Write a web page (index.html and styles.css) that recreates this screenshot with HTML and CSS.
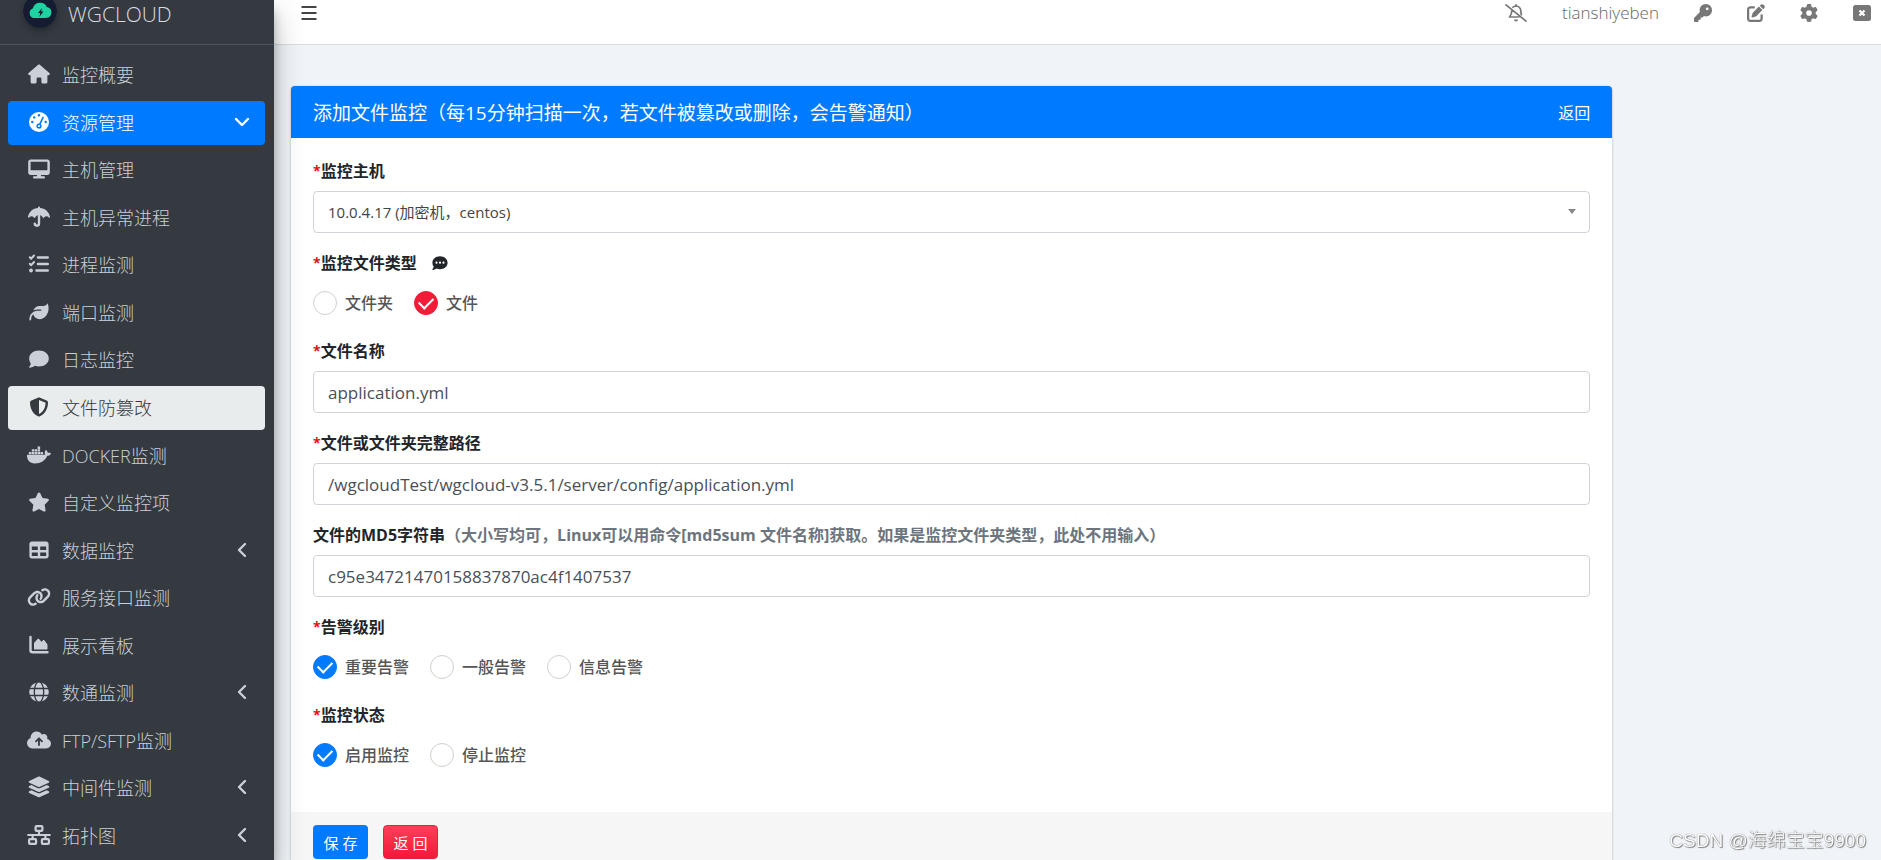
FILE: index.html
```html
<!DOCTYPE html>
<html lang="zh-CN">
<head>
<meta charset="utf-8">
<title>WGCLOUD</title>
<link rel="stylesheet" href="styles.css">
</head>
<body>
<div class="app">
  <aside class="sidebar">
    <a class="brand" href="#">
      <svg class="brand-logo" viewBox="0 0 34 34" aria-hidden="true"><circle cx="17" cy="17" r="17" fill="#131c30"/><path fill="#1ed3a2" d="M11 24a5 5 0 0 1-1.200-9.600 7.500 7.500 0 0 1 14-1.500A5.600 5.600 0 0 1 23 24z"/><path fill="#131c30" d="M19 14l-4 5h2.300l-1 4 4.200-5.400h-2.400z"/></svg>
      <span>WGCLOUD</span>
    </a>
    <nav class="menu">
      <a class="item" href="#"><svg class="ico" viewBox="-32 -64 640 640"><path d="M575.8 255.500c0 18-15 32.100-32 32.100h-32l.7 160.200c0 2.700-.2 5.400-.5 8.100V472c0 22.100-17.900 40-40 40H392c-22.100 0-40-17.900-40-40V384c0-17.700-14.300-32-32-32H256c-17.700 0-32 14.300-32 32v88c0 22.100-17.900 40-40 40H104c-22.100 0-40-17.900-40-40V287.600H32c-18 0-32-14-32-32.100c0-9 3-17 10-24L266.400 8c7-7 15-8 22-8s15 2 21 7L564.800 231.500c8 7 12 15 11 24z"/></svg><span>监控概要</span></a>
      <a class="item item-open" href="#"><svg class="ico" viewBox="0 0 24 24"><circle cx="12" cy="12" r="10"/><g fill="#007bff"><circle cx="12" cy="5.300" r="1.200"/><circle cx="7.200" cy="7.400" r="1.200"/><circle cx="5.300" cy="12" r="1.200"/><circle cx="18.700" cy="12" r="1.200"/><circle cx="12" cy="16" r="2.600"/></g><path d="M12 16l4-8.500" stroke="#007bff" stroke-width="1.700" stroke-linecap="round"/><circle cx="12" cy="16" r="1.100"/></svg><span>资源管理</span><svg class="chev" viewBox="0 0 16 16"><path d="M2 5l6 6 6-6"/></svg></a>
      <a class="item" href="#"><svg class="ico" viewBox="-32 -64 640 640"><path d="M64 0C28.700 0 0 28.700 0 64V352c0 35.300 28.700 64 64 64H240l-10.700 32H160c-17.700 0-32 14.300-32 32s14.300 32 32 32H416c17.700 0 32-14.300 32-32s-14.300-32-32-32H346.700L336 416H512c35.300 0 64-28.700 64-64V64c0-35.300-28.700-64-64-64H64zM512 64V288H64V64H512z"/></svg><span>主机管理</span></a>
      <a class="item" href="#"><svg class="ico" viewBox="0 0 24 24"><path d="M11 3V2.500a1 1 0 0 1 2 0V3c5 .4 9 3.600 10 9 .1.700-.6 1-1.100.500C20 10.600 18 10.700 16.400 13.300 15 10.800 13.500 10 12 10s-3 .8-4.400 3.300C6 10.700 4 10.600 2.100 12.500 1.600 13 .9 12.700 1 12 2 6.600 6 3.400 11 3z"/><path class="line" d="M12 11v7.600a2.100 2.100 0 0 1-4.200 0" stroke-width="2.400"/></svg><span>主机异常进程</span></a>
      <a class="item" href="#"><svg class="ico" viewBox="0 0 24 24"><path class="line" stroke-width="2" d="M2.800 5.200l1.400 1.500L7 3.500M2.800 11.700l1.400 1.500L7 10"/><circle cx="4" cy="18.500" r="1.900"/><path class="line" stroke-width="2.600" d="M11 5.500h9.700M11 12h9.700M9.500 18.500h11.200"/></svg><span>进程监测</span></a>
      <a class="item" href="#"><svg class="ico" viewBox="-64 -64 640 640"><path d="M272 96c-78.600 0-145.100 51.500-167.700 122.500c33.600-17 71.500-26.500 111.700-26.500h88c8.800 0 16 7.200 16 16s-7.200 16-16 16H216c-16.600 0-32.700 1.900-48.200 5.400c-25.900 5.900-50 16.400-71.400 30.700C38.300 298.800 0 364.900 0 440v16c0 13.300 10.700 24 24 24s24-10.700 24-24V440c0-48.700 20.700-92.500 53.800-123.200C121.600 392.300 190.300 448 272 448l1 0c132.100-.7 239-130.900 239-291.400c0-42.600-7.500-83.100-21.100-119.600c-2.600-6.900-12.700-6.600-16.200-.1C455.900 72.100 418.700 96 376 96L272 96z"/></svg><span>端口监测</span></a>
      <a class="item" href="#"><svg class="ico" viewBox="0 0 24 24"><path d="M12 3.500c5.500 0 9.800 3.500 9.800 8s-4.300 8-9.800 8c-1.400 0-2.800-.2-4-.7-1.500 1-3.400 1.900-5.400 1.900-.5 0-.7-.5-.4-.9.900-1 1.400-2.200 1.600-3.300C2.900 15.100 2.200 13.400 2.200 11.500c0-4.500 4.300-8 9.800-8z"/></svg><span>日志监控</span></a>
      <a class="item item-current" href="#"><svg class="ico" viewBox="-64 -64 640 640"><path d="M256 0c4.600 0 9.200 1 13.400 2.900L457.700 82.800c22 9.300 38.400 31 38.300 57.200c-.5 99.200-41.300 280.700-213.600 363.200c-16.700 8-36.100 8-52.800 0C57.300 420.700 16.500 239.200 16 140c-.1-26.200 16.300-47.900 38.300-57.200L242.700 2.900C246.800 1 251.400 0 256 0zm0 66.800V444.800C394 378 431.100 230.100 432 141.400L256 66.800z"/></svg><span>文件防篡改</span></a>
      <a class="item" href="#"><svg class="ico" viewBox="0 -64 640 640"><path d="M349.900 236.300h-66.100v-59.400h66.100v59.400zm0-204.300h-66.100v60.700h66.100V32zm78.200 144.800H362v59.400h66.100v-59.400zm-156.300-72.100h-66.100v60.100h66.100v-60.100zm78.100 0h-66.100v60.100h66.100v-60.100zm276.800 100c-14.400-9.700-47.600-13.200-73.100-8.400-3.300-24-16.700-44.900-41.100-63.700l-14-9.300-9.300 14c-18.400 27.800-23.400 73.600-3.700 103.800-8.700 4.700-25.800 11.100-48.400 10.700H2.400c-8.700 50.800 5.800 116.800 44 162.100 37.100 43.900 92.700 66.200 165.400 66.200 157.400 0 273.900-72.500 328.400-204.200 21.400.4 67.600.1 91.300-45.200 1.500-2.500 6.600-13.200 8.500-17.100l-13.300-8.900zm-511.100-27.900h-66v59.400h66.100v-59.400zm78.100 0h-66.100v59.400h66.100v-59.400zm78.100 0h-66.100v59.400h66.100v-59.400zm-78.100-72.100h-66.100v60.100h66.100v-60.100z"/></svg><span>DOCKER监测</span></a>
      <a class="item" href="#"><svg class="ico" viewBox="-32 -64 640 640"><path d="M316.900 18C311.600 7 300.400 0 288.100 0s-23.400 7-28.800 18L195 150.300 51.400 171.500c-12 1.800-22 10.200-25.700 21.700s-.7 24.200 7.900 32.700L137.800 329 113.200 474.700c-2 12 3 24.200 12.900 31.300s23 8 33.800 2.300l128.300-68.500 128.300 68.500c10.800 5.700 23.900 4.900 33.800-2.300s14.900-19.300 12.900-31.300L438.500 329 542.700 225.900c8.600-8.500 11.700-21.200 7.900-32.700s-13.700-19.900-25.700-21.700L381.200 150.300 316.900 18z"/></svg><span>自定义监控项</span></a>
      <a class="item" href="#"><svg class="ico" viewBox="-64 -64 640 640"><path d="M64 256V160H224v96H64zm0 64H224v96H64V320zm224 96V320H448v96H288zM448 256H288V160H448v96zM64 32C28.700 32 0 60.700 0 96V416c0 35.300 28.700 64 64 64H448c35.300 0 64-28.700 64-64V96c0-35.300-28.700-64-64-64H64z"/></svg><span>数据监控</span><svg class="chev" viewBox="0 0 16 16"><path d="M11 2L5 8l6 6"/></svg></a>
      <a class="item" href="#"><svg class="ico" viewBox="0 -64 640 640"><path d="M579.800 267.700c56.500-56.500 56.500-148 0-204.500c-50-50-128.800-56.500-186.300-15.400l-1.600 1.100c-14.400 10.300-17.700 30.300-7.400 44.600s30.300 17.700 44.600 7.400l1.600-1.100c32.100-22.900 76-19.300 103.800 8.600c31.500 31.500 31.500 82.500 0 114L422.300 334.800c-31.500 31.500-82.500 31.500-114 0c-27.900-27.900-31.500-71.800-8.600-103.800l1.100-1.600c10.300-14.400 6.900-34.400-7.400-44.600s-34.400-6.900-44.600 7.400l-1.100 1.600C206.500 251.200 213 330 263 380c56.500 56.500 148 56.500 204.500 0L579.800 267.700zM60.200 244.300c-56.500 56.500-56.500 148 0 204.500c50 50 128.800 56.500 186.300 15.400l1.600-1.100c14.400-10.300 17.700-30.300 7.400-44.600s-30.300-17.700-44.600-7.400l-1.600 1.100c-32.100 22.900-76 19.300-103.800-8.600C74 372 74 321 105.500 289.500L217.700 177.200c31.500-31.500 82.500-31.500 114 0c27.900 27.900 31.500 71.800 8.600 103.900l-1.100 1.600c-10.300 14.400-6.900 34.400 7.400 44.600s34.400 6.900 44.600-7.400l1.100-1.600C433.500 260.800 427 182 377 132c-56.500-56.500-148-56.500-204.500 0L60.200 244.300z"/></svg><span>服务接口监测</span></a>
      <a class="item" href="#"><svg class="ico" viewBox="0 0 24 24"><path class="line" stroke-width="2.400" d="M3.500 4v13.300a2 2 0 0 0 2 2h15"/><path d="M7 15.500v-5c0-.4.100-.7.400-.9l3-3.400c.5-.6 1.300-.6 1.800 0l2.300 2.500 1.300-1.300c.5-.5 1.300-.4 1.700.1l2.600 3.500c.2.300.4.600.4 1v3.500c0 .5-.4 1-1 1H8c-.6 0-1-.4-1-1z"/></svg><span>展示看板</span></a>
      <a class="item" href="#"><svg class="ico" viewBox="0 0 24 24"><circle cx="12" cy="12" r="9.800"/><g fill="none" stroke="#343a40" stroke-width="1.300"><ellipse cx="12" cy="12" rx="4.700" ry="10.300"/><path d="M2 8.500h20M2 15.500h20"/></g></svg><span>数通监测</span><svg class="chev" viewBox="0 0 16 16"><path d="M11 2L5 8l6 6"/></svg></a>
      <a class="item" href="#"><svg class="ico" viewBox="0 -64 640 640"><path d="M144 480C64.500 480 0 415.500 0 336c0-62.800 40.200-116.200 96.200-135.900c-.1-2.700-.2-5.400-.2-8.100c0-88.400 71.600-160 160-160c59.300 0 111 32.200 138.700 80.200C409.900 102 428.300 96 448 96c53 0 96 43 96 96c0 12.200-2.300 23.800-6.400 34.600C596 238.400 640 290.100 640 352c0 70.700-57.300 128-128 128H144z"/><path d="M320 390V220M240 290l80-80 80 80" fill="none" stroke="#343a40" stroke-width="48" stroke-linecap="round" stroke-linejoin="round"/></svg><span>FTP/SFTP监测</span></a>
      <a class="item" href="#"><svg class="ico" viewBox="-10 -40 596 596"><path d="M264.500 5.200c14.900-6.900 32.100-6.900 47 0l218.600 101c8.500 3.900 13.900 12.400 13.900 21.800s-5.400 17.900-13.900 21.800l-218.600 101c-14.900 6.900-32.100 6.900-47 0L45.900 149.800C37.400 145.800 32 137.300 32 128s5.400-17.900 13.900-21.800L264.500 5.200zM476.900 209.600l53.200 24.600c8.500 3.900 13.900 12.400 13.900 21.800s-5.400 17.900-13.900 21.800l-218.600 101c-14.900 6.900-32.100 6.900-47 0L45.900 277.800C37.400 273.800 32 265.300 32 256s5.400-17.900 13.900-21.800l53.200-24.600 152 70.200c23.400 10.800 50.400 10.800 73.800 0l152-70.200zm-152 198.200l152-70.200 53.200 24.600c8.500 3.900 13.900 12.400 13.900 21.800s-5.400 17.900-13.900 21.800l-218.600 101c-14.900 6.900-32.100 6.900-47 0L45.900 405.800C37.400 401.800 32 393.300 32 384s5.400-17.900 13.900-21.800l53.200-24.600 152 70.200c23.400 10.800 50.400 10.800 73.800 0z"/></svg><span>中间件监测</span><svg class="chev" viewBox="0 0 16 16"><path d="M11 2L5 8l6 6"/></svg></a>
      <a class="item" href="#"><svg class="ico" viewBox="0 0 24 24"><g class="line" stroke-width="2.200"><rect x="8.600" y="3.100" width="6.800" height="4.800" rx="1"/><rect x="2.100" y="16.100" width="7" height="4.800" rx="1"/><rect x="14.900" y="16.100" width="7" height="4.800" rx="1"/><path d="M1.200 12h21.600M12 8v4M5.600 12v4M18.400 12v4"/></g></svg><span>拓扑图</span><svg class="chev" viewBox="0 0 16 16"><path d="M11 2L5 8l6 6"/></svg></a>
    </nav>
  </aside>

  <div class="page">
    <header class="topbar">
      <button class="tool" type="button" aria-label="菜单"><svg viewBox="0 0 18 18"><path d="M1.500 3h15M1.500 9h15M1.500 15h15" fill="none" stroke="#444" stroke-width="2"/></svg></button>
      <div class="tools">
        <button class="tool tool-wide" type="button" aria-label="消息"><svg viewBox="0 0 22 18"><g fill="none" stroke="#777" stroke-width="1.700" stroke-linecap="round" stroke-linejoin="round"><path d="M1 .9l20 16.200M6.800 6.600c0 3.500-.8 4.800-2.300 6.400h9.200M8 3.200A5 5 0 0 1 11 2a4.800 4.800 0 0 1 4.800 5c0 1.600.2 2.700.6 3.600M11 .8V2"/></g><path fill="#777" d="M9 15.500h4a2 2 0 0 1-4 0z"/></svg></button>
        <a class="user" href="#">tianshiyeben</a>
        <button class="tool" type="button" aria-label="密码"><svg viewBox="0 0 512 512"><path d="M336 352c97.200 0 176-78.800 176-176S433.200 0 336 0S160 78.800 160 176c0 18.700 2.900 36.800 8.300 53.700L7 391c-4.500 4.500-7 10.600-7 17v80c0 13.300 10.700 24 24 24h80c13.300 0 24-10.700 24-24V448h40c13.300 0 24-10.700 24-24V384h40c6.400 0 12.500-2.500 17-7l33.300-33.300c16.900 5.400 35 8.300 53.700 8.300zM376 96a40 40 0 1 1 0 80 40 40 0 1 1 0-80z"/></svg></button>
        <button class="tool" type="button" aria-label="编辑"><svg viewBox="0 0 512 512"><path d="M471.600 21.700c-21.900-21.900-57.300-21.900-79.200 0L362.300 51.700l97.900 97.900 30.100-30.100c21.900-21.900 21.900-57.300 0-79.200L471.600 21.700zm-299.200 220c-6.100 6.100-10.800 13.600-13.500 21.900l-29.600 88.800c-2.900 8.600-.6 18.100 5.800 24.600s15.900 8.700 24.600 5.800l88.800-29.600c8.200-2.700 15.700-7.400 21.900-13.500L437.700 172.300 339.700 74.300 172.400 241.700zM96 64C43 64 0 107 0 160V416c0 53 43 96 96 96H352c53 0 96-43 96-96V320c0-17.700-14.300-32-32-32s-32 14.300-32 32v96c0 17.700-14.300 32-32 32H96c-17.700 0-32-14.300-32-32V160c0-17.700 14.300-32 32-32h96c17.700 0 32-14.300 32-32s-14.300-32-32-32H96z"/></svg></button>
        <button class="tool" type="button" aria-label="设置"><svg viewBox="0 0 512 512"><path d="M495.900 166.600c3.200 8.700 .5 18.400-6.400 24.600l-43.300 39.400c1.100 8.300 1.700 16.800 1.700 25.400s-.6 17.100-1.700 25.400l43.300 39.400c6.900 6.200 9.600 15.900 6.400 24.600c-4.400 11.900-9.700 23.300-15.800 34.300l-4.700 8.100c-6.600 11-14 21.400-22.100 31.200c-5.900 7.200-15.700 9.600-24.500 6.800l-55.700-17.700c-13.400 10.300-28.200 18.900-44 25.400l-12.500 57.100c-2 9.100-9 16.300-18.200 17.800c-13.800 2.300-28 3.500-42.500 3.500s-28.700-1.200-42.500-3.500c-9.200-1.500-16.200-8.700-18.200-17.800l-12.500-57.100c-15.800-6.500-30.600-15.100-44-25.400L83.100 425.900c-8.800 2.800-18.600 .3-24.500-6.800c-8.100-9.800-15.500-20.200-22.100-31.200l-4.700-8.100c-6.100-11-11.400-22.400-15.800-34.300c-3.200-8.700-.5-18.400 6.400-24.600l43.300-39.400C64.600 273.100 64 264.600 64 256s.6-17.100 1.700-25.400L22.400 191.200c-6.900-6.200-9.600-15.900-6.400-24.600c4.400-11.900 9.700-23.300 15.800-34.300l4.700-8.100c6.600-11 14-21.400 22.100-31.200c5.900-7.200 15.700-9.600 24.500-6.800l55.700 17.700c13.400-10.300 28.200-18.900 44-25.400l12.500-57.100c2-9.100 9-16.300 18.200-17.800C227.300 1.200 241.500 0 256 0s28.700 1.200 42.500 3.500c9.200 1.500 16.200 8.700 18.200 17.800l12.500 57.100c15.800 6.500 30.600 15.100 44 25.400l55.700-17.700c8.800-2.800 18.600-.3 24.500 6.800c8.100 9.800 15.500 20.200 22.100 31.200l4.700 8.100c6.100 11 11.400 22.400 15.800 34.300zM256 336a80 80 0 1 0 0-160 80 80 0 1 0 0 160z"/></svg></button>
        <button class="tool" type="button" aria-label="退出"><svg viewBox="0 0 18 18"><rect y="1" width="18" height="16" rx="2.500"/><path d="M6.500 6.500l5 5m0-5l-5 5" stroke="#fff" stroke-width="2.200"/></svg></button>
      </div>
    </header>

    <main class="content">
      <form class="card">
        <div class="card-head"><h1 class="title">添加文件监控（每15分钟扫描一次，若文件被篡改或删除，会告警通知）</h1><a class="back" href="#">返回</a></div>
        <div class="card-body">
          <div class="group">
            <label class="label" for="host"><span class="req">*</span>监控主机</label>
            <div class="select-wrap"><select class="field field-select" id="host"><option>10.0.4.17 (加密机，centos)</option></select></div>
          </div>
          <div class="group" role="radiogroup" aria-labelledby="l-type">
            <div class="label" id="l-type"><span class="req">*</span>监控文件类型<svg class="tip" viewBox="0 0 16 16"><path fill="#212529" d="M8 1.200c4.300 0 7.600 2.900 7.600 6.500S12.300 14.200 8 14.200c-1.200 0-2.300-.2-3.300-.6-1.200.8-2.600 1.400-4.200 1.400-.4 0-.5-.4-.3-.6.800-.9 1.400-1.900 1.500-2.800A6 6 0 0 1 .4 7.700c0-3.600 3.300-6.500 7.600-6.500z"/><g fill="#fff"><circle cx="4.500" cy="7.700" r="1.100"/><circle cx="8" cy="7.700" r="1.100"/><circle cx="11.500" cy="7.700" r="1.100"/></g></svg></div>
            <div class="radios">
              <label class="radio"><input type="radio" name="type">文件夹</label>
              <label class="radio radio-red"><input type="radio" name="type" checked>文件</label>
            </div>
          </div>
          <div class="group">
            <label class="label" for="name"><span class="req">*</span>文件名称</label>
            <input class="field" id="name" type="text" value="application.yml">
          </div>
          <div class="group">
            <label class="label" for="path"><span class="req">*</span>文件或文件夹完整路径</label>
            <input class="field" id="path" type="text" value="/wgcloudTest/wgcloud-v3.5.1/server/config/application.yml">
          </div>
          <div class="group">
            <label class="label" for="md5">文件的MD5字符串<span class="hint">（大小写均可，Linux可以用命令[md5sum 文件名称]获取。如果是监控文件夹类型，此处不用输入）</span></label>
            <input class="field" id="md5" type="text" value="c95e34721470158837870ac4f1407537">
          </div>
          <div class="group" role="radiogroup" aria-labelledby="l-level">
            <div class="label" id="l-level"><span class="req">*</span>告警级别</div>
            <div class="radios">
              <label class="radio"><input type="radio" name="level" checked>重要告警</label>
              <label class="radio"><input type="radio" name="level">一般告警</label>
              <label class="radio"><input type="radio" name="level">信息告警</label>
            </div>
          </div>
          <div class="group" role="radiogroup" aria-labelledby="l-state">
            <div class="label" id="l-state"><span class="req">*</span>监控状态</div>
            <div class="radios">
              <label class="radio"><input type="radio" name="state" checked>启用监控</label>
              <label class="radio"><input type="radio" name="state">停止监控</label>
            </div>
          </div>
        </div>
        <div class="card-foot">
          <button class="btn" type="button">保 存</button>
          <button class="btn btn-red" type="button">返 回</button>
        </div>
      </form>
    </main>
  </div>
</div>
<div class="watermark">CSDN @海绵宝宝9900</div>
</body>
</html>
```
FILE: styles.css
```css
* { box-sizing: border-box; }

body {
  margin: 0;
  font-family: "Open Sans", "Noto Sans CJK SC", sans-serif;
  font-size: 16px;
  color: #212529;
  background: #f0f4f8;
}

a { text-decoration: none; color: inherit; }
button { font: inherit; cursor: pointer; }

.app { display: flex; height: 100vh; overflow: hidden; }

/* Sidebar */
.sidebar {
  position: relative;
  z-index: 2;
  display: flex;
  flex-direction: column;
  flex: 0 0 274px;
  background: #343a40;
  color: #cbd0d8;
  box-shadow: 0 14px 28px rgba(0, 0, 0, .25), 0 10px 10px rgba(0, 0, 0, .22);
}

.brand {
  display: flex;
  flex: none;
  align-items: flex-end;
  gap: 11px;
  height: 45px;
  padding: 0 23px 16px;
  border-bottom: 1px solid #4b545c;
  font-size: 21px;
  font-weight: 300;
  line-height: 28px;
  color: #d8dce0;
}

.brand-logo {
  flex: none;
  width: 34px;
  height: 34px;
  border-radius: 50%;
  box-shadow: 0 3px 6px rgba(0, 0, 0, .3);
}

.menu {
  display: flex;
  flex: 1;
  flex-direction: column;
  justify-content: space-between;
  gap: 3px;
  padding: 8px 9px 2px 8px;
}

.item {
  display: flex;
  flex: none;
  align-items: center;
  gap: 11px;
  height: 44px;
  padding: 0 15px 2px 19px;
  border-radius: 4px;
  font-size: 18px;
  font-weight: 300;
}

.item-open { background: #007bff; color: #fff; }
.item-current { background: #e9ecec; color: #343a40; }

.ico { flex: none; width: 24px; height: 24px; fill: currentColor; }
.line { fill: none; stroke: currentColor; stroke-linecap: round; stroke-linejoin: round; }

.chev {
  width: 16px;
  height: 16px;
  margin-left: auto;
  fill: none;
  stroke: currentColor;
  stroke-width: 2.4;
  stroke-linecap: round;
  stroke-linejoin: round;
}

/* Top bar */
.page { display: flex; flex: 1; flex-direction: column; min-width: 0; }

.topbar {
  display: flex;
  flex: none;
  justify-content: space-between;
  height: 45px;
  padding: 0 10px 18px 26px;
  background: #fff;
  border-bottom: 1px solid #d6dee3;
}

.tools { display: flex; align-items: center; gap: 35px; }

.tool {
  width: 18px;
  padding: 0;
  border: 0;
  background: none;
  line-height: 0;
}

.tool svg { width: 100%; height: 18px; fill: #777; }
.tool-wide { width: 22px; }
.user { font-size: 17px; font-weight: 300; line-height: 26px; color: #666; }

/* Card */
.content {
  flex: 1;
  overflow: auto;
  scrollbar-width: none;
  padding: 41px 17px 16px;
}

.card {
  width: 84%;
  border-radius: 4px;
  background: #fff;
  box-shadow: 0 0 1px rgba(0, 0, 0, .3), 0 1px 3px rgba(0, 0, 0, .2);
}

.card-head {
  display: flex;
  align-items: center;
  justify-content: space-between;
  height: 52px;
  padding: 0 22px;
  border-radius: 4px 4px 0 0;
  background: #007bff;
  color: #fff;
}

.title { margin: 0; font-size: 19px; font-weight: 400; }
.card-body { padding: 21px 22px; }
.group { margin-bottom: 18px; }

.label {
  display: flex;
  align-items: center;
  margin-bottom: 8px;
  font-weight: 700;
  line-height: 24px;
}

.req { font-size: 14px; color: #e01020; }
.hint { color: #6c757d; }
.tip { width: 16px; height: 16px; margin-left: 15px; }

.field {
  display: block;
  width: 100%;
  height: 42px;
  padding: 0 14px;
  border: 1px solid #ced4da;
  border-radius: 4px;
  background: #fff;
  font-family: inherit;
  font-size: 17px;
  color: #495057;
}

.select-wrap { position: relative; }
.field-select { appearance: none; font-size: 15px; color: #444; }

.select-wrap::after {
  content: "";
  position: absolute;
  top: 18px;
  right: 14px;
  border: 4px solid transparent;
  border-top: 5px solid #888;
  border-bottom: 0;
}

.radios { display: flex; gap: 21px; padding: 8px 0 6px; }

.radio {
  display: flex;
  align-items: center;
  gap: 8px;
  font-weight: 500;
  line-height: 24px;
  color: #555;
}

.radio input {
  appearance: none;
  display: flex;
  justify-content: center;
  width: 24px;
  height: 24px;
  margin: 0;
  padding-top: 5px;
  border: 1px solid #d3cfc8;
  border-radius: 50%;
  background: #fff;
}

.radio input:checked { border-color: #007bff; background: #007bff; }
.radio-red input:checked { border-color: #f01c38; background: #f01c38; }

.radio input:checked::before {
  content: "";
  width: 12px;
  height: 7px;
  border: solid #fff;
  border-width: 0 0 2px 2px;
  transform: rotate(-45deg);
}

.card-foot {
  display: flex;
  gap: 15px;
  padding: 13px 22px;
  background: #f6f6f7;
}

.btn {
  width: 55px;
  height: 34px;
  padding: 0;
  border: 0;
  border-radius: 4px;
  background: #007bff;
  color: #fff;
  font-size: 15px;
}

.btn-red { background: linear-gradient(#fb4058, #f5183a); border: 1px solid #e0243c; }

.watermark {
  position: fixed;
  right: 15px;
  bottom: 5px;
  font-family: "Liberation Sans", "Noto Sans CJK SC", sans-serif;
  font-size: 19px;
  font-weight: 300;
  line-height: 28px;
  color: #fff;
  text-shadow: 0 0 1px #555, 1px 1px 1px #888;
}
```
